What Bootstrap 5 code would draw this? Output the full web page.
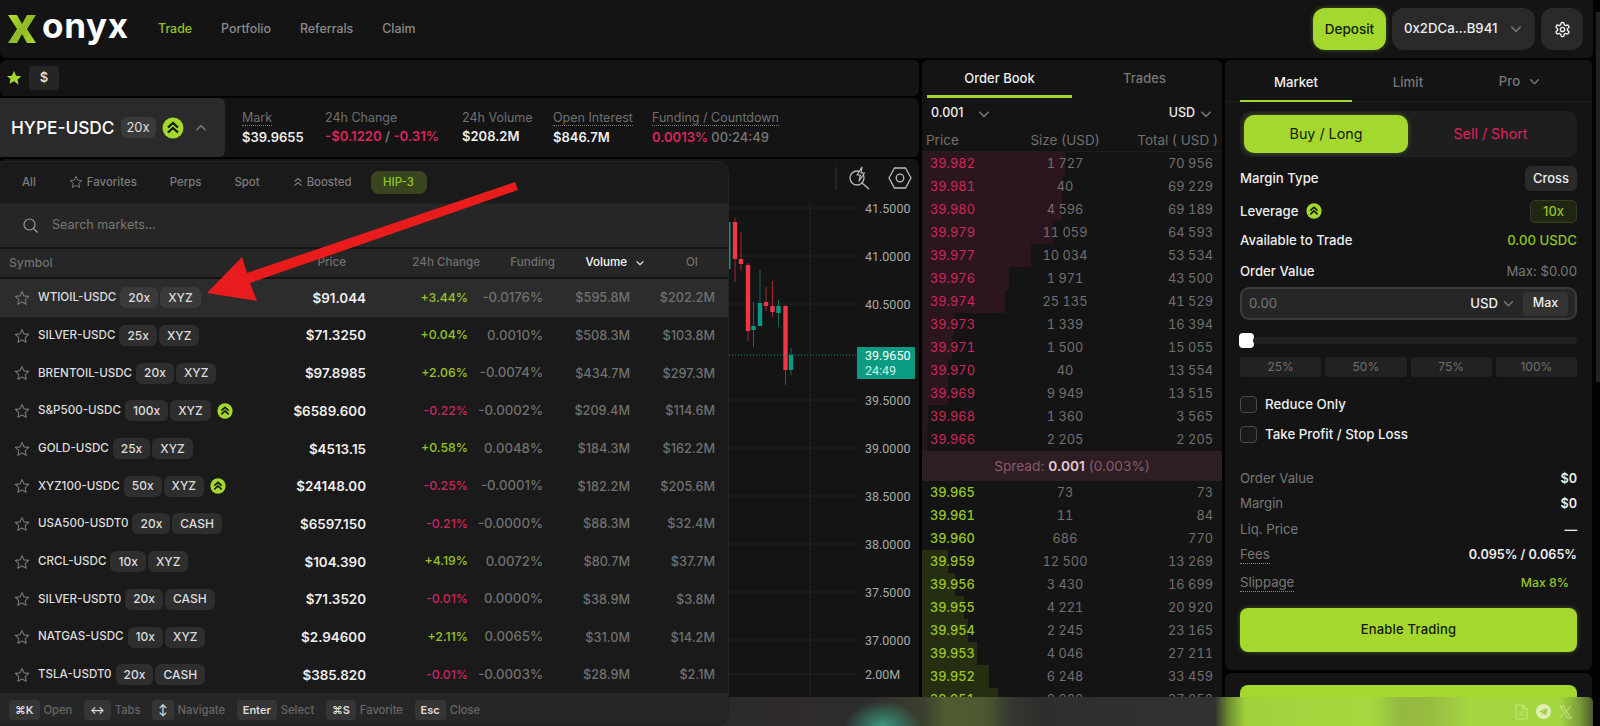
<!DOCTYPE html>
<html lang="en">
<head>
<meta charset="UTF-8">
<meta name="viewport" content="width=device-width, initial-scale=1.0">
<title>Onyx - Trade</title>
<link href="https://cdn.jsdelivr.net/npm/bootstrap@5.3.3/dist/css/bootstrap.min.css" rel="stylesheet">
<style>
:root { --lime: #a4d82e; --lime-text: #93c524; --pink: #dd2360; --panel: #141414; --dim: #777; }
html, body { height: 726px; overflow: hidden; }
body { background: #030303; color: #eee; font-family: Inter, "Liberation Sans", sans-serif; font-size: 14px; position: relative; }
svg { display: block; flex: none; }
.shell { width: 1593px; }
.topbar { height: 58px; background: var(--panel); padding: 0 10px 0 8px; border-radius: 0 0 6px 6px; }
.brand { width: 120px; }
.brand-word { font-size: 35px; font-weight: 700; line-height: 32px; color: #fff; letter-spacing: .7px; margin-left: 5px; margin-top: -8px; }
.menu-link { font-size: 12.4px; font-weight: 500; color: #8a8a8a; text-decoration: none; }
.menu-link.on { color: var(--lime-text); }
.menu { margin-left: 30px; gap: 29px; }
.top-actions { gap: 6px; }
.btn-lime { background: var(--lime); color: #14180a; border: 0; box-shadow: 0 0 5px rgba(164,216,46,.35); }
.deposit { width: 73px; height: 42px; border-radius: 12px; font-size: 13.5px; font-weight: 500; }
.wallet { width: 143px; height: 42px; border-radius: 12px; background: #2a2a2a; color: #eee; font-size: 13.2px; font-weight: 500; padding: 0 12px; }
.gear { width: 42px; height: 42px; border-radius: 12px; background: #2a2a2a; }
.work { margin-top: 2px; gap: 3px; }
.left-col { width: 919px; gap: 2px; }
.panel { background: var(--panel); border-radius: 6px; }
.fav-bar { height: 36px; padding: 0 0 0 6px; gap: 7px; }
.dollar { width: 30px; height: 24px; background: #252525; border-radius: 4px; font-size: 13px; font-weight: 600; color: #ddd; }
.ticker { height: 59px; }
.pair { width: 225px; height: 59px; background: #2a2a2a; border-radius: 0 6px 6px 0; padding-left: 11px; }
.pair-name { font-size: 17.3px; font-weight: 500; color: #fff; }
.pair-lev { width: 35px; height: 21px; background: #3a3a3a; border-radius: 6px; font-size: 13px; margin-left: 6px; margin-right: 6px; color: #ddd; }
.pair-chev { margin-left: 10px; }
.stat { font-size: 13px; line-height: 18px; margin-top: -2px; }
.stat-label { color: #707070; font-size: 12.5px; }
.stat-label.dash { border-bottom: 1px dotted #777; line-height: 15px; margin-bottom: 2px; }
.stat-val { font-weight: 600; color: #eee; }
.stat-wide { font-size: 13.2px; }
.txt-pink { color: var(--pink); }
.txt-lime { color: var(--lime-text); }
.txt-dim { color: var(--dim); }
.stat-a { margin-left: 17px; width: 83px; }
.stat-b { width: 137px; }
.stat-c { width: 91px; }
.stat-d { width: 99px; }
.chart-panel { height: 572px; }
.chart-tools { height: 38px; }
.book { width: 300px; height: 670px; overflow: hidden; }
.book-tabs { height: 38px; }
.book-tab { width: 145px; margin-left: 5px; height: 38px; line-height: 37px; text-align: center; font-size: 13px; font-weight: 500; color: #777; }
.book-tab.on { color: #eee; border-bottom: 3px solid var(--lime); }
.book-tab.off { margin-left: 0; width: 145px; }
.book-sel { height: 30px; padding: 1px 9px 0 9px; font-size: 12.5px; font-weight: 500; color: #eee; }
.sel-gap { gap: 13px; }
.book-head { height: 24px; padding: 2px 4px 0 4px; display: grid; grid-template-columns: 89px 100px 1fr; align-items: center; font-size: 13.5px; color: #707070; border-bottom: 1px solid #1e1e1e; }
.book-line { height: 23px; padding: 0 9px 0 8px; display: grid; grid-template-columns: 85px 100px 1fr; align-items: center; font-size: 12.8px; line-height: 23px; color: #707070; background-repeat: no-repeat; font-variant-numeric: tabular-nums; }
.book-line.ask { background-image: linear-gradient(#2c161e, #2c161e); }
.book-line.bid { background-image: linear-gradient(#262e12, #262e12); }
.ask .px { color: #d3255f; }
.bid .px { color: #98c823; font-weight: 500; }
.spread { height: 30px; background: #2c1e22; color: #8a5a6e; font-size: 13.7px; }
.spread b { font-weight: 600; color: #e6c8d4; }
.order { width: 367px; padding: 0 15px; }
.order-tabs { height: 42px; margin: 0 -15px; padding: 0 15px; border-bottom: 1px solid #1e1e1e; }
.order-tab { width: 112px; height: 42px; line-height: 45px; text-align: center; font-size: 13.2px; font-weight: 500; color: #777; }
.order-tab.on { color: #eee; border-bottom: 2px solid var(--lime); }
.side-switch { height: 46px; background: #1e1e1e; border-radius: 10px; padding: 4px; margin-top: 9px; }
.side-btn { width: 164px; height: 38px; border-radius: 10px; font-size: 14.3px; }
.side-sell { flex: 1; color: var(--pink); font-size: 14.3px; }
.opt-row { font-size: 13.2px; font-weight: 500; color: #eee; }
.m1 { margin-top: 1px; }
.m2 { margin-top: 2px; }
.m4 { margin-top: 4px; }
.m7 { margin-top: 7px; }
.m9 { margin-top: 9px; }
.m13 { margin-top: 13px; }
.m19 { margin-top: 19px; }
.m24 { margin-top: 24px; }
.h25 { height: 25px; }
.h23 { height: 23px; }
.h22 { height: 22px; }
.cross { width: 52px; height: 25px; background: #2a2a2a; border-radius: 6px; font-size: 13px; }
.lev-box { width: 47px; height: 23px; background: #1f2712; border: 1px solid #33401a; border-radius: 5px; color: var(--lime-text); font-size: 13px; }
.amount { height: 33px; background: #262626; border: 2px solid #3c3c3c; border-radius: 9px; padding: 0 7px; font-size: 13.2px; }
.max-btn { width: 45px; height: 24px; background: #333; border-radius: 4px; font-size: 12.5px; font-weight: 500; }
.slide { height: 15px; }
.slide-track { height: 7px; background: #222; border-radius: 4px; flex: 1; margin-left: -1px; }
.slide-dot { width: 15px; height: 15px; background: #fff; border-radius: 4px; margin-left: -1px; }
.pct { height: 20px; background: #222; border-radius: 3px; font-size: 12px; color: #707070; flex: 1; }
.tick { width: 17px; height: 17px; border: 1.5px solid #4a4a4a; border-radius: 4px; background: #1a1a1a; }
.tick-row { height: 17px; gap: 8px; font-size: 13.3px; font-weight: 500; color: #eee; }
.sum-row { height: 24px; font-size: 13.2px; }
.sum-row .lbl { color: #777; }
.sum-row .val { color: #eee; font-weight: 600; font-size: 12.6px; }
.sum-row .slip { font-size: 12.3px; font-weight: 500; }
.dotted { border-bottom: 1px dotted #888; line-height: 17px; }
.enable { height: 44px; border-radius: 8px; font-size: 13px; font-weight: 500; letter-spacing: .2px; }
.order-top { height: 610px; }
.order-next { height: 53px; margin-top: 3px; padding: 12px 15px 0; }
.order-next div { height: 60px; background: var(--lime); border-radius: 8px; }

/* markets dropdown, sits over the chart */
.markets { position: absolute; left: 0; top: 161px; width: 729px; height: 565px; background: #1a1a1a; border-radius: 0 12px 12px 0; z-index: 5; border: 1px solid #232323; border-left: 0; overflow: hidden; }
.mk-tabs { height: 41px; padding-left: 22px; gap: 33px; font-size: 11.4px; font-weight: 500; color: #7c7c7c; }
.mk-hip { width: 56px; height: 23px; background: #39451f; border-radius: 8px; color: var(--lime-text); margin-left: -14px; }
.mk-search { height: 46px; background: #262626; padding-left: 23px; gap: 14px; font-size: 12.6px; color: #777; border-bottom: 2px solid #141414; border-top: 1px solid #202020; }
.mk-head { height: 30px; background: #262626; display: grid; grid-template-columns: 246px 100px 134px 75px 90px 53px; align-items: center; font-size: 11.6px; font-weight: 500; color: #6f6f6f; text-align: right; border-bottom: 2px solid #141414; }
.mk-head .sym { text-align: left; padding-left: 9px; font-size: 12.2px; }
.mk-row { height: 37.7px; display: grid; grid-template-columns: 266px 100px 102px 75px 87px 85px; align-items: center; text-align: right; font-size: 12.7px; }
.mk-row.hot { background: #2c2c2c; }
.mk-sym { padding-left: 14px; gap: 2px; font-size: 11.6px; font-weight: 500; color: #ddd; text-align: left; }
.mk-star { margin-right: 6px; }
.mk-chip { height: 21px; padding: 0 8px; background: #2e2e2e; border-radius: 6px; font-size: 12px; color: #ddd; }
.mk-row.hot .mk-chip { background: #3a3a3a; }
.mk-name { margin-right: 2px; }
.mk-price { font-weight: 600; color: #eee; font-size: 13.4px; }
.mk-num { color: #707070; font-weight: 500; }
.mk-fund { font-size: 13.2px; }
.mk-up { color: var(--lime-text); font-weight: 500; font-size: 12.3px; }
.mk-down { color: #c9265f; font-weight: 500; font-size: 12.3px; }
.hints { position: absolute; left: 0; right: 0; top: 531px; height: 34px; background: #262626; padding-left: 9px; font-size: 11.2px; font-weight: 500; color: #666; }
.key { height: 20px; min-width: 19px; padding: 0 6px; background: #353535; border-radius: 4px; color: #ddd; font-size: 11px; font-weight: 600; margin-right: 4px; }
.hint { margin-right: 11.7px; }

/* the blur over the page below is painted as colour stops */
.status { position: absolute; left: 0; bottom: 0; width: 1593px; height: 29px; border-radius: 5px 5px 0 0; z-index: 4; padding-right: 21px; gap: 8px;
  background:
    radial-gradient(ellipse 38px 26px at 883px 30px, rgba(58,160,135,.95), rgba(58,160,135,0)),
    linear-gradient(90deg, #2b2a2a 729px, #2f2a2a 790px, #2c2c2c 860px, #3c4030 925px, #4f5c30 945px, #4c5830 985px, #36382f 1010px, #2e2e2e 1040px, #303030 1120px, #323232 1215px, #6a8a30 1228px, #a0d03a 1245px, #a6da40 1370px, #95b840 1400px, #98bc42 1430px, #a4d640 1470px, #a4d640 1560px, #7a9a38 1580px, #4a5a2a 1593px); }
.scroll-thumb { position: absolute; right: 0; top: 12px; width: 4px; height: 370px; background: #222; }
.arrow { position: absolute; left: 0; top: 0; z-index: 9; pointer-events: none; }
</style>
</head>
<body>
<svg width="0" height="0" class="position-absolute">
  <symbol id="boost" viewBox="0 0 22 22">
    <circle cx="11" cy="11" r="10.5" fill="#a4d82e"/>
    <path d="M6 10.5 11 6l5 4.5M6 15.5l5-4.5 5 4.5" fill="none" stroke="#14180a" stroke-width="2.3"/>
  </symbol>
  <symbol id="star" viewBox="0 0 16 16">
    <path d="M8 1.5l2 4.4 4.7.5-3.5 3.2 1 4.7L8 11.9l-4.2 2.4 1-4.7L1.3 6.4 6 5.9z" fill="none" stroke="currentColor" stroke-width="1.1" stroke-linejoin="round"/>
  </symbol>
  <symbol id="chev" viewBox="0 0 12 12">
    <path d="M2 4l4 4 4-4" fill="none" stroke="currentColor" stroke-width="1.3"/>
  </symbol>
  <linearGradient id="logoFill" x1="0" y1="0" x2="1" y2="1">
    <stop offset="0" stop-color="#b2e032"/>
    <stop offset=".5" stop-color="#8fb824"/>
    <stop offset="1" stop-color="#a8dc2e"/>
  </linearGradient>
</svg>

<div class="shell">
  <header class="topbar d-flex align-items-center">
    <div class="brand d-flex align-items-center">
      <svg width="29" height="30" viewBox="8 13 29 30"><path d="M8 14h9l5 9 5-9h9l-9 14 9 14h-9l-5-9-5 9H8l9-14z" fill="url(#logoFill)"/></svg>
      <span class="brand-word">onyx</span>
    </div>
    <nav class="menu d-flex">
      <a class="menu-link on" href="#">Trade</a>
      <a class="menu-link" href="#">Portfolio</a>
      <a class="menu-link" href="#">Referrals</a>
      <a class="menu-link" href="#">Claim</a>
    </nav>
    <div class="ms-auto d-flex top-actions align-items-center">
      <button class="btn btn-lime deposit p-0">Deposit</button>
      <div class="wallet d-flex align-items-center justify-content-between">0x2DCa...B941 <svg width="14" height="14" class="txt-dim"><use href="#chev"/></svg></div>
      <div class="gear d-flex align-items-center justify-content-center">
        <svg width="17" height="17" viewBox="0 0 24 24" fill="none" stroke="#eee" stroke-width="2"><path d="M12.22 2h-.44a2 2 0 0 0-2 2v.18a2 2 0 0 1-1 1.73l-.43.25a2 2 0 0 1-2 0l-.15-.08a2 2 0 0 0-2.73.73l-.22.38a2 2 0 0 0 .73 2.73l.15.1a2 2 0 0 1 1 1.72v.51a2 2 0 0 1-1 1.74l-.15.09a2 2 0 0 0-.73 2.73l.22.38a2 2 0 0 0 2.73.73l.15-.08a2 2 0 0 1 2 0l.43.25a2 2 0 0 1 1 1.73V20a2 2 0 0 0 2 2h.44a2 2 0 0 0 2-2v-.18a2 2 0 0 1 1-1.73l.43-.25a2 2 0 0 1 2 0l.15.08a2 2 0 0 0 2.73-.73l.22-.39a2 2 0 0 0-.73-2.73l-.15-.08a2 2 0 0 1-1-1.74v-.5a2 2 0 0 1 1-1.74l.15-.09a2 2 0 0 0 .73-2.73l-.22-.38a2 2 0 0 0-2.73-.73l-.15.08a2 2 0 0 1-2 0l-.43-.25a2 2 0 0 1-1-1.73V4a2 2 0 0 0-2-2z"/><circle cx="12" cy="12" r="3"/></svg>
      </div>
    </div>
  </header>

  <div class="work d-flex align-items-start">
    <div class="left-col d-flex flex-column">
      <div class="panel fav-bar d-flex align-items-center">
        <svg width="16" height="16" viewBox="0 0 16 16"><path d="M8 1l2.2 4.7 5 .6-3.7 3.4 1 5L8 11.3l-4.5 2.4 1-5L.8 6.3l5-.6z" fill="#a4d82e"/></svg>
        <div class="dollar d-flex align-items-center justify-content-center">$</div>
      </div>
      <div class="panel ticker d-flex align-items-center">
        <div class="pair d-flex align-items-center">
          <span class="pair-name">HYPE-USDC</span>
          <span class="pair-lev d-flex align-items-center justify-content-center">20x</span>
          <svg width="22" height="22"><use href="#boost"/></svg>
          <svg width="14" height="14" class="txt-dim pair-chev"><use href="#chev" transform="rotate(180 7 7)"/></svg>
        </div>
        <div class="stat stat-a"><span class="stat-label dash d-inline-block">Mark</span><div class="stat-val">$39.9655</div></div>
        <div class="stat stat-b"><div class="stat-label">24h Change</div><div class="stat-val stat-wide txt-pink">-$0.1220 <span class="txt-dim">/</span> -0.31%</div></div>
        <div class="stat stat-c"><div class="stat-label">24h Volume</div><div class="stat-val">$208.2M</div></div>
        <div class="stat stat-d"><span class="stat-label dash d-inline-block">Open Interest</span><div class="stat-val">$846.7M</div></div>
        <div class="stat"><span class="stat-label dash d-inline-block">Funding / Countdown</span><div class="stat-val"><span class="txt-pink">0.0013%</span> <span class="txt-dim fw-medium">00:24:49</span></div></div>
      </div>
      <div class="panel chart-panel">
        <div class="chart-tools">
          <svg width="919" height="38" viewBox="0 159 919 38">
            <line x1="836" y1="167" x2="836" y2="190" stroke="#333"/>
            <circle cx="857" cy="178" r="7" fill="none" stroke="#bbb" stroke-width="1.3"/>
            <path d="M862 183l7 6" stroke="#bbb" stroke-width="1.4"/>
            <path d="M862 167l-5 8h3.5l-1.5 6 5.5-8h-3.5z" fill="#141414" stroke="#bbb" stroke-width="1.2" stroke-linejoin="round"/>
            <path d="M889 178l5.5-10h11l5.500 10-5.500 10h-11z" fill="none" stroke="#bbb" stroke-width="1.3"/>
            <circle cx="900" cy="178" r="3.8" fill="none" stroke="#bbb" stroke-width="1.3"/>
          </svg>
        </div>
        <svg id="chart" width="919" height="534" viewBox="0 197 919 534"></svg>
      </div>
    </div>

    <div class="panel book">
      <div class="book-tabs d-flex">
        <div class="book-tab on">Order Book</div>
        <div class="book-tab off">Trades</div>
      </div>
      <div class="book-sel d-flex align-items-center justify-content-between">
        <span class="d-flex align-items-center sel-gap">0.001 <svg width="14" height="14" class="txt-dim"><use href="#chev"/></svg></span>
        <span class="d-flex align-items-center gap-1">USD <svg width="14" height="14" class="txt-dim"><use href="#chev"/></svg></span>
      </div>
      <div class="book-head">
        <span>Price</span><span class="text-center">Size (USD)</span><span class="text-end">Total ( USD )</span>
      </div>
      <div id="asks"></div>
      <div class="spread d-flex align-items-center justify-content-center gap-1">Spread: <b>0.001</b> (0.003%)</div>
      <div id="bids"></div>
    </div>

    <div class="d-flex flex-column">
      <div class="panel order order-top">
        <div class="order-tabs d-flex">
          <div class="order-tab on">Market</div>
          <div class="order-tab">Limit</div>
          <div class="order-tab d-flex align-items-center justify-content-center gap-2">Pro <svg width="13" height="13"><use href="#chev"/></svg></div>
        </div>
        <div class="side-switch d-flex align-items-center">
          <button class="btn btn-lime side-btn p-0">Buy / Long</button>
          <div class="side-sell text-center">Sell / Short</div>
        </div>
        <div class="opt-row h25 m9 d-flex align-items-center justify-content-between">Margin Type <span class="cross d-flex align-items-center justify-content-center">Cross</span></div>
        <div class="opt-row h23 m9 d-flex align-items-center justify-content-between">
          <span class="d-flex align-items-center gap-2">Leverage <svg width="16" height="16"><use href="#boost"/></svg></span>
          <span class="lev-box d-flex align-items-center justify-content-center">10x</span>
        </div>
        <div class="opt-row h22 m7 d-flex align-items-center justify-content-between">Available to Trade <span class="txt-lime">0.00 USDC</span></div>
        <div class="opt-row h22 m9 d-flex align-items-center justify-content-between">Order Value <span class="txt-dim fw-normal">Max: $0.00</span></div>
        <div class="amount m4 d-flex align-items-center">
          <span class="txt-dim">0.00</span>
          <span class="ms-auto d-flex align-items-center gap-1 me-2 fw-medium">USD <svg width="13" height="13" class="txt-dim"><use href="#chev"/></svg></span>
          <span class="max-btn d-flex align-items-center justify-content-center">Max</span>
        </div>
        <div class="slide m13 d-flex align-items-center"><div class="slide-dot"></div><div class="slide-track"></div></div>
        <div class="m9 d-flex gap-1">
          <div class="pct d-flex align-items-center justify-content-center">25%</div>
          <div class="pct d-flex align-items-center justify-content-center">50%</div>
          <div class="pct d-flex align-items-center justify-content-center">75%</div>
          <div class="pct d-flex align-items-center justify-content-center">100%</div>
        </div>
        <div class="tick-row m19 d-flex align-items-center"><span class="tick"></span>Reduce Only</div>
        <div class="tick-row m13 d-flex align-items-center"><span class="tick"></span>Take Profit / Stop Loss</div>
        <div class="sum-row m24 d-flex align-items-center justify-content-between"><span class="lbl">Order Value</span><span class="val">$0</span></div>
        <div class="sum-row m1 d-flex align-items-center justify-content-between"><span class="lbl">Margin</span><span class="val">$0</span></div>
        <div class="sum-row m2 d-flex align-items-center justify-content-between"><span class="lbl">Liq. Price</span><span class="val">—</span></div>
        <div class="sum-row m1 d-flex align-items-center justify-content-between"><span class="lbl dotted">Fees</span><span class="val">0.095% / 0.065%</span></div>
        <div class="sum-row mt-1 d-flex align-items-center justify-content-between"><span class="lbl dotted">Slippage</span><span class="txt-lime slip me-2">Max 8%</span></div>
        <button class="btn btn-lime enable w-100 m13 p-0">Enable Trading</button>
      </div>
      <div class="panel order-next"><div></div></div>
    </div>
  </div>
</div>

<div class="scroll-thumb"></div>

<div class="markets">
  <div class="mk-tabs d-flex align-items-center">
    <span>All</span>
    <span class="d-flex align-items-center gap-1"><svg width="14" height="14"><use href="#star"/></svg>Favorites</span>
    <span>Perps</span>
    <span>Spot</span>
    <span class="d-flex align-items-center gap-1"><svg width="10" height="10" viewBox="0 0 10 10" fill="none" stroke="currentColor" stroke-width="1.2"><path d="M1.5 4.5 5 1.5l3.5 3M1.5 8.5 5 5.5l3.5 3"/></svg>Boosted</span>
    <span class="mk-hip d-flex align-items-center justify-content-center">HIP-3</span>
  </div>
  <div class="mk-search d-flex align-items-center">
    <svg width="15" height="15" viewBox="0 0 15 15" fill="none" stroke="#999" stroke-width="1.2"><circle cx="6.5" cy="6.5" r="5.5"/><path d="M10.5 10.5l4 4"/></svg>
    <span>Search markets...</span>
  </div>
  <div class="mk-head">
    <span class="sym">Symbol</span><span>Price</span><span>24h Change</span><span>Funding</span>
    <span class="d-flex align-items-center justify-content-end gap-2 text-light">Volume <svg width="10" height="10"><use href="#chev"/></svg></span><span>OI</span>
  </div>
  <div id="marketRows"></div>
  <div class="hints d-flex align-items-center">
    <span class="key d-flex align-items-center justify-content-center">⌘K</span><span class="hint">Open</span>
    <span class="key d-flex align-items-center justify-content-center">↔</span><span class="hint">Tabs</span>
    <span class="key d-flex align-items-center justify-content-center">↕</span><span class="hint">Navigate</span>
    <span class="key d-flex align-items-center justify-content-center">Enter</span><span class="hint">Select</span>
    <span class="key d-flex align-items-center justify-content-center">⌘S</span><span class="hint">Favorite</span>
    <span class="key d-flex align-items-center justify-content-center">Esc</span><span class="hint">Close</span>
  </div>
</div>

<div class="status d-flex align-items-center justify-content-end">
  <svg width="13" height="16" viewBox="0 0 13 16" fill="none" stroke="#d5e8a0" stroke-width="1.2" opacity=".7"><path d="M1 1h7l4 4v10H1zM8 1v4h4M3.5 8h6M3.5 11h6"/></svg>
  <svg width="15" height="15" viewBox="0 0 15 15" opacity=".85"><circle cx="7.5" cy="7.5" r="7.5" fill="#e8f3c8"/><path d="M3 7.5l8.500-3.500-1.500 7.500-2.500-2-1.300 1.300-.2-2.300 3.500-2.800-4.500 2.700z" fill="#a4c84a"/></svg>
  <svg width="13" height="14" viewBox="0 0 13 14" fill="none" stroke="#d5e8a0" stroke-width="1.1" opacity=".7"><path d="M1 1h3l8 12H9zM12 1 1 13"/></svg>
</div>

<svg class="arrow" width="1600" height="726"><polygon points="207,293 242,257 247,273 515,182 518,190 250,283 257,301" fill="#e81c1c"/></svg>

<script>
  const markets = [
    ['WTIOIL-USDC', '20x', 'XYZ', 0, '$91.044', '+3.44%', '-0.0176%', '$595.8M', '$202.2M'],
    ['SILVER-USDC', '25x', 'XYZ', 0, '$71.3250', '+0.04%', '0.0010%', '$508.3M', '$103.8M'],
    ['BRENTOIL-USDC', '20x', 'XYZ', 0, '$97.8985', '+2.06%', '-0.0074%', '$434.7M', '$297.3M'],
    ['S&amp;P500-USDC', '100x', 'XYZ', 1, '$6589.600', '-0.22%', '-0.0002%', '$209.4M', '$114.6M'],
    ['GOLD-USDC', '25x', 'XYZ', 0, '$4513.15', '+0.58%', '0.0048%', '$184.3M', '$162.2M'],
    ['XYZ100-USDC', '50x', 'XYZ', 1, '$24148.00', '-0.25%', '-0.0001%', '$182.2M', '$205.6M'],
    ['USA500-USDT0', '20x', 'CASH', 0, '$6597.150', '-0.21%', '-0.0000%', '$88.3M', '$32.4M'],
    ['CRCL-USDC', '10x', 'XYZ', 0, '$104.390', '+4.19%', '0.0072%', '$80.7M', '$37.7M'],
    ['SILVER-USDT0', '20x', 'CASH', 0, '$71.3520', '-0.01%', '0.0000%', '$38.9M', '$3.8M'],
    ['NATGAS-USDC', '10x', 'XYZ', 0, '$2.94600', '+2.11%', '0.0065%', '$31.0M', '$14.2M'],
    ['TSLA-USDT0', '20x', 'CASH', 0, '$385.820', '-0.01%', '-0.0003%', '$28.9M', '$2.1M']
  ];
  document.getElementById('marketRows').innerHTML = markets.map((m, i) => `
    <div class="mk-row ${i === 0 ? 'hot' : ''}">
      <div class="mk-sym d-flex align-items-center">
        <svg width="16" height="16" class="mk-star txt-dim"><use href="#star"/></svg>
        <span class="mk-name">${m[0]}</span>
        <span class="mk-chip d-flex align-items-center">${m[1]}</span>
        <span class="mk-chip d-flex align-items-center">${m[2]}</span>
        ${m[3] ? '<svg width="16" height="16" class="ms-1"><use href="#boost"/></svg>' : ''}
      </div>
      <span class="mk-price">${m[4]}</span>
      <span class="${m[5][0] === '+' ? 'mk-up' : 'mk-down'}">${m[5]}</span>
      <span class="mk-num mk-fund">${m[6]}</span>
      <span class="mk-num">${m[7]}</span>
      <span class="mk-num">${m[8]}</span>
    </div>`).join('');

  const asks = [
    ['39.982', '1 727', '70 956', 143], ['39.981', '40', '69 229', 140], ['39.980', '4 596', '69 189', 140],
    ['39.979', '11 059', '64 593', 131], ['39.977', '10 034', '53 534', 109], ['39.976', '1 971', '43 500', 87],
    ['39.974', '25 135', '41 529', 83], ['39.973', '1 339', '16 394', 32], ['39.971', '1 500', '15 055', 30],
    ['39.970', '40', '13 554', 26], ['39.969', '9 949', '13 515', 26], ['39.968', '1 360', '3 565', 6],
    ['39.966', '2 205', '2 205', 5]
  ];
  const bids = [
    ['39.965', '73', '73', 0], ['39.961', '11', '84', 0], ['39.960', '686', '770', 0],
    ['39.959', '12 500', '13 269', 26], ['39.956', '3 430', '16 699', 33], ['39.955', '4 221', '20 920', 42],
    ['39.954', '2 245', '23 165', 46], ['39.953', '4 046', '27 211', 55], ['39.952', '6 248', '33 459', 67],
    ['39.951', '9 000', '37 250', 76]
  ];
  const bookRow = (r, side) => `<div class="book-line ${side}" style="background-size:${r[3]}px 100%">
    <span class="px">${r[0]}</span><span class="text-center">${r[1]}</span><span class="text-end">${r[2]}</span></div>`;
  document.getElementById('asks').innerHTML = asks.map(r => bookRow(r, 'ask')).join('');
  document.getElementById('bids').innerHTML = bids.map(r => bookRow(r, 'bid')).join('');

  // chart drawn in page coordinates
  const UP = '#089981', DOWN = '#f23645';
  const candles = [ // x, wick top, wick bottom, body top, body bottom, colour
    [735, 218, 282, 222, 259, DOWN], [741, 232, 271, 259, 264, DOWN], [748, 263, 341, 265, 331, DOWN],
    [753.5, 302, 347, 326, 330, UP], [760, 270, 326, 303, 326, UP], [766, 287, 311, 302, 306, DOWN],
    [772.5, 281, 317, 306, 312, DOWN], [778.5, 300, 327, 306, 313, UP], [785.5, 305, 385, 306, 370, DOWN],
    [791, 348, 375, 355, 370, UP]
  ];
  const axis = [[208, '41.5000'], [256, '41.0000'], [304, '40.5000'], [400, '39.5000'], [448, '39.0000'], [496, '38.5000'], [544, '38.0000'], [592, '37.5000'], [640, '37.0000']];
  let s = '<line x1="810" y1="203" x2="810" y2="697" stroke="#222"/>';
  axis.forEach(a => {
    s += `<line x1="729" y1="${a[0]}" x2="857" y2="${a[0]}" stroke="#222"/>`;
    s += `<text x="865" y="${a[0] + 4.5}" font-family="Roboto, sans-serif" font-size="12.5" fill="#a8a8a8">${a[1]}</text>`;
  });
  s += '<line x1="729" y1="674" x2="857" y2="674" stroke="#222"/><text x="865" y="678.5" font-family="Roboto, sans-serif" font-size="12.5" fill="#a8a8a8">2.00M</text>';
  s += `<rect x="729" y="222" width="1.5" height="47" fill="${UP}"/>`;
  candles.forEach(c => {
    s += `<line x1="${c[0]}" x2="${c[0]}" y1="${c[1]}" y2="${c[2]}" stroke="${c[5]}" stroke-opacity=".65" stroke-width="1"/>`;
    s += `<rect x="${c[0] - 2.2}" y="${c[3]}" width="4.4" height="${c[4] - c[3]}" fill="${c[5]}"/>`;
  });
  s += `<line x1="729" y1="355" x2="857" y2="355" stroke="${UP}" stroke-dasharray="1 2"/>`;
  s += '<rect x="857" y="347" width="58" height="32" rx="1" fill="#0a9c80"/>';
  s += '<text x="865" y="360" font-family="Roboto, sans-serif" font-size="12.5" fill="#fff">39.9650</text>';
  s += '<text x="865" y="375" font-family="Roboto, sans-serif" font-size="12.5" fill="#c9efe5">24:49</text>';
  document.getElementById('chart').innerHTML = s;
</script>
<script src="https://cdn.jsdelivr.net/npm/bootstrap@5.3.3/dist/js/bootstrap.bundle.min.js"></script>
</body>
</html>
